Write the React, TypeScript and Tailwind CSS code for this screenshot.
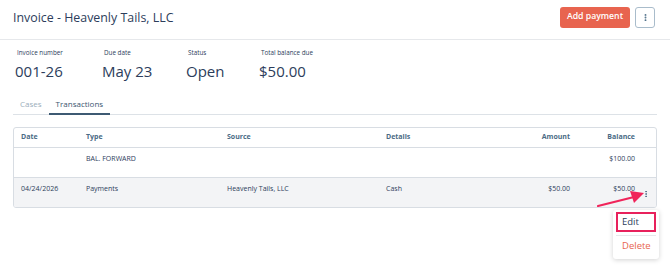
import { EllipsisVertical } from "lucide-react";

const font = { fontFamily: '"Open Sans", "Noto Sans", sans-serif' };

const stats = [
  { label: "Invoice number", value: "001-26", w: "w-[87px]" },
  { label: "Due date", value: "May 23", w: "w-[84px]" },
  { label: "Status", value: "Open", w: "w-[73px]" },
  { label: "Total balance due", value: "$50.00", w: "w-[120px]" },
];

export default function App() {
  return (
    <div className="relative h-[275px] w-[670px] overflow-hidden bg-white text-[#2c3d5b]" style={font}>
      {/* Header */}
      <div className="flex h-[40px] items-center justify-between border-b border-[#e6e8eb] pl-[13px] pr-[15px]">
        <h1 className="pb-[3px] text-[12.4px] leading-none">Invoice - Heavenly Tails, LLC</h1>
        <div className="flex items-center gap-[5px] pb-[5px]">
          <button className="flex h-[21px] w-[70px] items-center justify-center rounded-[3px] bg-[#e8644f] text-[8.7px] font-semibold text-white">
            Add payment
          </button>
          <button className="flex h-[21px] w-[20px] items-center justify-center rounded-[3px] border border-[#a9bccb] bg-white text-[#4a6b85]">
            <EllipsisVertical className="h-[9px] w-[9px]" strokeWidth={3} />
          </button>
        </div>
      </div>

      {/* Stats */}
      <div className="flex pl-[15px] pt-[9px]">
        {stats.map((s) => (
          <div key={s.label} className={s.w}>
            <div className="pl-[2px] text-[6.3px] leading-[8px]">{s.label}</div>
            <div className="mt-[5px] text-[15px] leading-[18px]">{s.value}</div>
          </div>
        ))}
      </div>

      {/* Tabs */}
      <div className="mx-[13px] mt-[18px] flex border-b border-[#dde2e7] text-[8px] leading-[11px]">
        <div className="px-[7px] pb-[5px] text-[#9aaebb]">Cases</div>
        <div className="-mb-px border-b-2 border-[#3d5a73] px-[7px] pb-[4px] text-[#3b5670]">Transactions</div>
      </div>

      {/* Table */}
      <div className="mx-[13px] mt-[12px] overflow-hidden rounded-[3px] border border-[#d8dde3] text-[7px]">
        <div className="flex h-[20px] items-center border-b border-[#d8dde3] font-bold text-[#4a6b85]">
          <div className="w-[72px] pl-[7px]">Date</div>
          <div className="w-[141px]">Type</div>
          <div className="w-[159px]">Source</div>
          <div className="w-[100px]">Details</div>
          <div className="w-[84px] text-right">Amount</div>
          <div className="w-[65px] text-right">Balance</div>
        </div>
        <div className="flex h-[30px] border-b border-[#d8dde3] pt-[6px]">
          <div className="w-[72px] pl-[7px]"></div>
          <div className="w-[141px]">BAL. FORWARD</div>
          <div className="w-[159px]"></div>
          <div className="w-[100px]"></div>
          <div className="w-[84px] text-right"></div>
          <div className="w-[65px] text-right">$100.00</div>
        </div>
        <div className="flex h-[29px] bg-[#f3f4f6] pt-[6px]">
          <div className="w-[72px] pl-[7px]">04/24/2026</div>
          <div className="w-[141px]">Payments</div>
          <div className="w-[159px]">Heavenly Tails, LLC</div>
          <div className="w-[100px]">Cash</div>
          <div className="w-[84px] text-right">$50.00</div>
          <div className="w-[65px] text-right">$50.00</div>
          <div className="flex flex-1 justify-center pt-[6px] text-[#4a6b85]">
            <EllipsisVertical className="h-[8px] w-[8px]" strokeWidth={3} />
          </div>
        </div>
      </div>

      {/* Arrow annotation */}
      <svg className="absolute left-[594px] top-[184px]" width="56" height="26" viewBox="0 0 56 26">
        <line x1="4" y1="22" x2="40" y2="13" stroke="#f0245a" strokeWidth="2.2" strokeLinecap="round" />
        <polygon points="50,9 36,7 40,19" fill="#f0245a" />
      </svg>

      {/* Dropdown menu */}
      <div className="absolute left-[613px] top-[210px] w-[46px] rounded-[3px] bg-white py-[2px] text-[9.5px] shadow-[0_1px_5px_rgba(0,0,0,0.18)]">
        <div className="mx-[3px] flex h-[20px] items-center border-2 border-[#e8215c] pl-[4px] text-[#2c3d5b]">Edit</div>
        <div className="mx-[3px] mt-[3px] border-t border-[#e6e8eb]"></div>
        <div className="flex h-[21px] items-center pl-[9px] text-[#e8644f]">Delete</div>
      </div>
    </div>
  );
}
